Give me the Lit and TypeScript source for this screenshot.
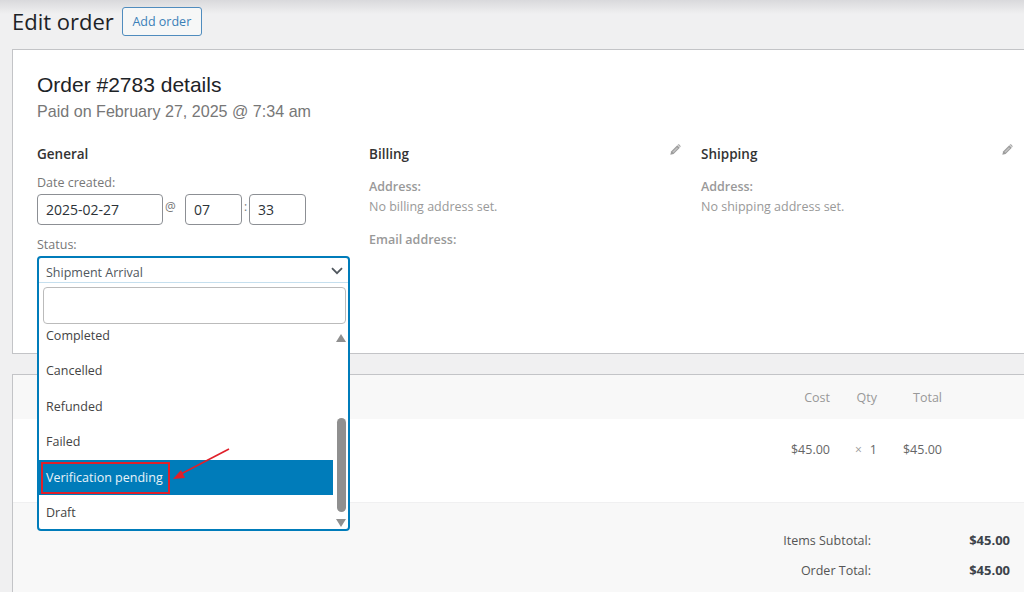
import { LitElement, css, html, svg } from "lit";
import { customElement } from "lit/decorators.js";

const pencil = svg`<path d="M8.3 1.2l2.5 2.5-6.2 6.2-3.3.8.8-3.3z" fill="#9c9c9c"/><path d="M8 3.2l1 1-4.6 4.6-1-1z" fill="#c4c4c4"/><path d="M8.9.6c.4-.4 1-.4 1.4 0l1.1 1.1c.4.4.4 1 0 1.4l-.2.2-2.5-2.5z" fill="#a7a7a7"/>`;

@customElement("app-root")
export class AppRoot extends LitElement {
  static styles = css`
    :host {
      display: block;
      position: relative;
      height: 592px;
      overflow: hidden;
      background: #f0f0f1;
      color: #3c434a;
      font-family: "Open Sans", "Noto Sans", sans-serif;
      font-size: 12.5px;
    }
    .topshade {
      position: absolute;
      left: 0;
      right: 0;
      top: 0;
      height: 14px;
      background: linear-gradient(#d9d9dc, #f0f0f1);
    }
    .page {
      position: relative;
      padding: 7px 0 0 12px;
      width: 1040px;
      box-sizing: border-box;
    }
    .titlebar {
      display: flex;
      align-items: center;
      gap: 8px;
      height: 29px;
    }
    h1 {
      margin: 0;
      font-size: 22px;
      font-weight: 400;
      color: #1d2327;
      line-height: 29px;
    }
    .add {
      height: 29px;
      width: 80px;
      box-sizing: border-box;
      border: 1px solid #4f8cbe;
      border-radius: 3px;
      background: #f6f7f7;
      color: #3a80b8;
      font: inherit;
      font-size: 12.5px;
      padding: 0;
    }
    .card {
      background: #fff;
      border: 1px solid #c3c4c7;
    }
    .details {
      margin-top: 13px;
      height: 305px;
      box-sizing: border-box;
      padding: 22px 24px 0;
    }
    h2 {
      margin: 0;
      font-family: "Liberation Sans", Arial, sans-serif;
      font-size: 21px;
      font-weight: 400;
      line-height: 26px;
      color: #1d2327;
    }
    .paid {
      font-family: "Liberation Sans", Arial, sans-serif;
      font-size: 16.1px;
      line-height: 26px;
      color: #777;
    }
    .cols {
      display: grid;
      grid-template-columns: 332px 332px 322px;
      margin-top: 20px;
    }
    .col {
      position: relative;
    }
    h3 {
      margin: 0 0 9px;
      font-size: 13.5px;
      font-weight: 600;
      line-height: 20px;
      color: #333;
    }
    .edit {
      position: absolute;
      top: 0;
      right: 20px;
      width: 12px;
      height: 12px;
    }
    .col.last .edit {
      right: 10px;
    }
    .field-label {
      color: #777;
      line-height: 20px;
    }
    .date-row {
      display: flex;
      align-items: flex-start;
      margin-top: 1px;
      color: #777;
    }
    .input {
      height: 31px;
      box-sizing: border-box;
      border: 1px solid #8c8f94;
      border-radius: 4px;
      padding: 0 8px;
      line-height: 29px;
      font-size: 14px;
      color: #2c3338;
    }
    .date { width: 126px; }
    .time { width: 57px; }
    .at { width: 22px; padding-left: 2px; box-sizing: border-box; line-height: 26px; font-size: 12px; }
    .colon { width: 7px; text-align: center; line-height: 26px; font-size: 12px; }
    .status-label { margin-top: 10px; }
    .address-label {
      font-weight: 600;
      color: #999;
      line-height: 20px;
    }
    .address {
      padding-top: 4px;
    }
    .address-value {
      color: #999;
      line-height: 20px;
    }
    .email { margin-top: 13px; }
    .items {
      margin-top: 20px;
      height: 240px;
    }
    .grid {
      display: grid;
      grid-template-columns: 752px 65px 47px 65px;
      text-align: right;
    }
    .head { color: #999; line-height: 46px; height: 44px; background: #f8f8f8; }
    .row {
      height: 83px;
      line-height: 61px;
      color: #666;
      border-bottom: 1px solid #f0f0f1;
    }
    .row .qty .x { color: #999; font-size: 12px; margin-right: 8px; }
    .totals {
      background: #f8f8f8;
      height: 112px;
      padding-top: 23px;
      box-sizing: border-box;
    }
    .total-row {
      display: grid;
      grid-template-columns: 858px 139px;
      text-align: right;
      line-height: 30px;
      color: #555;
    }
    .total-row b { color: #3c434a; font-weight: 700; font-size: 13px; line-height: 28px; }
    .dropdown {
      position: absolute;
      left: 0;
      top: 112px;
      width: 313px;
      height: 275px;
      box-sizing: border-box;
      border: 2px solid #007cba;
      border-radius: 4px;
      background: #fff;
      overflow: hidden;
    }
    .current {
      height: 24px;
      line-height: 29px;
      padding-left: 7px;
      color: #50575e;
      border-bottom: 1px solid #c5dfee;
      position: relative;
    }
    .chev {
      position: absolute;
      right: 5px;
      top: 9px;
    }
    .search {
      height: 37px;
      margin: 4px 2px 0 4px;
      box-sizing: border-box;
      border: 1px solid #bbb;
      border-radius: 4px;
    }
    .list {
      height: 205px;
      display: flex;
    }
    .options { width: 294px; }
    .opt {
      height: 35.5px;
      line-height: 36px;
      padding-left: 7px;
      color: #444;
    }
    .opt.first { height: 29px; line-height: 24px; }
    .opt.sel { background: #007cba; color: #e8f3f9; }
    .scroll {
      position: relative;
      flex: 1;
    }
    .thumb {
      position: absolute;
      left: 4px;
      top: 94px;
      width: 9px;
      height: 94px;
      border-radius: 5px;
      background: #8f8f8f;
    }
    .up, .down {
      position: absolute;
      left: 3px;
      width: 0;
      height: 0;
      border-left: 5px solid transparent;
      border-right: 5px solid transparent;
    }
    .up { top: 10px; border-bottom: 8px solid #8f8f8f; }
    .down { top: 195px; border-top: 8px solid #8f8f8f; }
    .mark {
      position: absolute;
      left: 41px;
      top: 462px;
      width: 129px;
      height: 32px;
      box-sizing: border-box;
      border: 2px solid #e0202a;
    }
    .arrow {
      position: absolute;
      left: 170px;
      top: 445px;
    }
  `;

  render() {
    return html`
      <div class="topshade"></div>
      <div class="page">
        <div class="titlebar">
          <h1>Edit order</h1>
          <button class="add">Add order</button>
        </div>

        <div class="card details">
          <h2>Order #2783 details</h2>
          <div class="paid">Paid on February 27, 2025 @ 7:34 am</div>
          <div class="cols">
            <div class="col">
              <h3>General</h3>
              <div class="field-label">Date created:</div>
              <div class="date-row">
                <div class="input date">2025-02-27</div>
                <span class="at">@</span>
                <div class="input time">07</div>
                <span class="colon">:</span>
                <div class="input time">33</div>
              </div>
              <div class="field-label status-label">Status:</div>
              <div class="dropdown">
                <div class="current">
                  Shipment Arrival
                  <svg class="chev" width="12" height="8" viewBox="0 0 12 8">
                    <path d="M1 1.2l5 5 5-5" fill="none" stroke="#50575e" stroke-width="1.8" />
                  </svg>
                </div>
                <div class="search"></div>
                <div class="list">
                  <div class="options">
                    <div class="opt first">Completed</div>
                    <div class="opt">Cancelled</div>
                    <div class="opt">Refunded</div>
                    <div class="opt">Failed</div>
                    <div class="opt sel">Verification pending</div>
                    <div class="opt">Draft</div>
                  </div>
                  <div class="scroll">
                    <div class="up"></div>
                    <div class="thumb"></div>
                    <div class="down"></div>
                  </div>
                </div>
              </div>
            </div>
            <div class="col">
              <h3>Billing</h3>
              <svg class="edit" viewBox="0 0 12 12">${pencil}</svg>
              <div class="address">
                <div class="address-label">Address:</div>
                <div class="address-value">No billing address set.</div>
                <div class="address-label email">Email address:</div>
              </div>
            </div>
            <div class="col last">
              <h3>Shipping</h3>
              <svg class="edit" viewBox="0 0 12 12">${pencil}</svg>
              <div class="address">
                <div class="address-label">Address:</div>
                <div class="address-value">No shipping address set.</div>
              </div>
            </div>
          </div>
        </div>

        <div class="card items">
          <div class="grid head">
            <span></span><span>Cost</span><span>Qty</span><span>Total</span>
          </div>
          <div class="grid row">
            <span></span><span>$45.00</span>
            <span class="qty"><span class="x">×</span>1</span>
            <span>$45.00</span>
          </div>
          <div class="totals">
            <div class="total-row"><span>Items Subtotal:</span><b>$45.00</b></div>
            <div class="total-row"><span>Order Total:</span><b>$45.00</b></div>
          </div>
        </div>
      </div>
      <div class="mark"></div>
      <svg class="arrow" width="64" height="40" viewBox="0 0 64 40">
        <path d="M59 4L9 30" stroke="#e0202a" stroke-width="1.6" fill="none" />
        <path d="M3 34l12-1-4-8z" fill="#e0202a" />
      </svg>
    `;
  }
}
